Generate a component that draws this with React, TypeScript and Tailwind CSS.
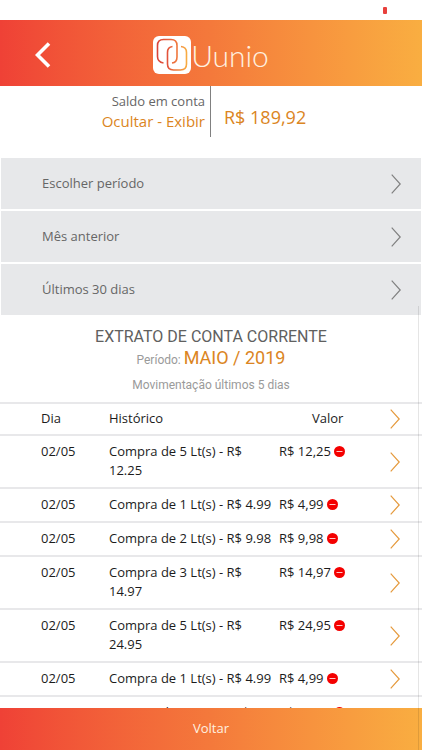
import type { ReactNode } from "react";

type Entry = {
  day: string;
  description: string;
  amount: string;
};

const periods = ["Escolher período", "Mês anterior", "Últimos 30 dias"];

const entries: Entry[] = [
  { day: "02/05", description: "Compra de 5 Lt(s) - R$ 12.25", amount: "R$ 12,25" },
  { day: "02/05", description: "Compra de 1 Lt(s) - R$ 4.99", amount: "R$ 4,99" },
  { day: "02/05", description: "Compra de 2 Lt(s) - R$ 9.98", amount: "R$ 9,98" },
  { day: "02/05", description: "Compra de 3 Lt(s) - R$ 14.97", amount: "R$ 14,97" },
  { day: "02/05", description: "Compra de 5 Lt(s) - R$ 24.95", amount: "R$ 24,95" },
  { day: "02/05", description: "Compra de 1 Lt(s) - R$ 4.99", amount: "R$ 4,99" },
  { day: "02/05", description: "Compra de 10 Lt(s) - R$ 49.90", amount: "R$ 49,90" },
];

function Chevron({ className }: { className: string }) {
  return (
    <svg viewBox="0 0 10 20" className={`h-5 w-[10px] shrink-0 ${className}`} fill="none" stroke="currentColor" strokeWidth="1.2" aria-hidden="true">
      <path d="M0.7 0.7 9.2 10 0.7 19.3" />
    </svg>
  );
}

function MinusBadge() {
  return (
    <svg viewBox="0 0 11 11" className="ml-[3px] inline-block size-[11px] align-[-1px]" aria-hidden="true">
      <circle cx="5.5" cy="5.5" r="5.5" fill="#f40000" />
      <path d="M2.5 5.5h6" stroke="#ffc9c9" strokeWidth="1" />
    </svg>
  );
}

function Logo() {
  return (
    <div className="flex items-center">
      <svg viewBox="0 0 38 38" className="size-[38px]" fill="none" aria-hidden="true">
        <defs>
          <linearGradient id="ring-left" x1="4" y1="0" x2="25" y2="0" gradientUnits="userSpaceOnUse">
            <stop stopColor="#d9433a" />
            <stop offset="1" stopColor="#f1793c" />
          </linearGradient>
          <linearGradient id="ring-right" x1="14" y1="0" x2="34" y2="0" gradientUnits="userSpaceOnUse">
            <stop stopColor="#e2503a" />
            <stop offset="1" stopColor="#f8ad42" />
          </linearGradient>
        </defs>
        <rect width="38" height="38" rx="6" fill="#fff" />
        <path d="M10.5 27Q4.5 26 4.5 20.5V9.5Q4.5 3.5 10.5 3.5H18Q24 3.5 24 9.5V21Q24 26.5 19 27" stroke="url(#ring-left)" strokeWidth="1.6" />
        <path d="M19.5 10.5Q14.5 11 14.5 16.5V28Q14.5 34 20.5 34H27.5Q33.5 34 33.5 28V16.5Q33.5 11 28 10.5" stroke="url(#ring-right)" strokeWidth="1.6" />
      </svg>
      <span className="font-['Lato'] text-[30px] leading-9 font-light text-[#fff1e0]">Uunio</span>
    </div>
  );
}

function HeadCell({ children, className = "" }: { children?: ReactNode; className?: string }) {
  return <th className={`pt-[5px] pb-1.5 text-left font-normal ${className}`}>{children}</th>;
}

export default function App() {
  return (
    <div className="relative flex h-dvh flex-col overflow-hidden bg-white font-['Open_Sans','Noto_Sans',sans-serif] text-[13px] text-[#1c1c1c]">
      <div className="flex h-5 shrink-0 items-center justify-end pr-[35px]">
        <span className="h-[7px] w-1 rounded-[1px] bg-[#e8403c]" />
      </div>
      <header className="grid h-[66px] shrink-0 grid-cols-[1fr_auto_1fr] items-center bg-linear-to-r from-[#ef4136] via-[#f4793b] to-[#f9ae41] pt-1">
        <button type="button" aria-label="Voltar à tela anterior" className="ml-[35px] w-4">
          <svg viewBox="0 0 16 26" className="h-[26px] w-4" fill="none" stroke="#fff" strokeWidth="3.6" aria-hidden="true">
            <path d="M14 1.5 2.5 13 14 24.5" />
          </svg>
        </button>
        <Logo />
      </header>

      <main className="min-h-0 flex-1 overflow-hidden">
        <section className="flex h-[72px] items-start">
          <div className="flex h-[51px] w-1/2 flex-col items-end border-r border-[#808080] pt-[5px] pr-[5px]">
            <span className="leading-5 text-[#666]">Saldo em conta</span>
            <button type="button" className="text-[15px] leading-5 text-[#db8522]">
              Ocultar - Exibir
            </button>
          </div>
          <span className="pt-[17px] pl-[13px] text-lg leading-7 text-[#db8522]">R$ 189,92</span>
        </section>

        <nav className="flex flex-col gap-0.5 px-px">
          {periods.map((label) => (
            <button key={label} type="button" className="flex h-[51px] items-center justify-between bg-[#e7e8ea] pr-5 pl-[41px] text-[#666]">
              {label}
              <Chevron className="text-[#808080]" />
            </button>
          ))}
        </nav>

        <section className="pt-3 pb-[7px] text-center font-['Roboto',sans-serif]">
          <h1 className="text-base leading-5 text-[#606060]">EXTRATO DE CONTA CORRENTE</h1>
          <p className="text-xs leading-[22px] text-[#9a9a9a]">
            Período: <strong className="text-lg leading-[22px] font-normal text-[#db8522]">MAIO / 2019</strong>
          </p>
          <p className="pt-1 text-xs leading-5 text-[#9a9a9a]">Movimentação últimos 5 dias</p>
        </section>

        <table className="w-full table-fixed border-collapse leading-[19px]">
          <colgroup>
            <col className="w-[109px]" />
            <col className="w-[170px]" />
            <col />
            <col className="w-8" />
          </colgroup>
          <thead>
            <tr className="border-y-2 border-[#e8e8ea]">
              <HeadCell className="pl-[41px]">Dia</HeadCell>
              <HeadCell>Histórico</HeadCell>
              <HeadCell className="pl-[33px]">Valor</HeadCell>
              <HeadCell>
                <Chevron className="-my-0.5 text-[#e59a3d]" />
              </HeadCell>
            </tr>
          </thead>
          <tbody>
            {entries.map((entry, i) => (
              <tr key={i} className="border-b-2 border-[#e8e8ea]">
                <td className="pt-1.5 pb-[7px] pl-[41px] align-top">{entry.day}</td>
                <td className="pt-1.5 pb-[7px] pr-[5px] align-top">{entry.description}</td>
                <td className="pt-1.5 pb-[7px] align-top whitespace-nowrap">
                  {entry.amount}
                  <MinusBadge />
                </td>
                <td className="align-middle">
                  <Chevron className="text-[#e59a3d]" />
                </td>
              </tr>
            ))}
          </tbody>
        </table>
      </main>

      <footer className="h-[42px] shrink-0">
        <button type="button" className="size-full bg-linear-to-r from-[#ef4136] via-[#f4793b] to-[#f9ae41] text-[#fff1e0]">
          Voltar
        </button>
      </footer>

      <div className="absolute top-[306px] right-[3px] bottom-0 w-px bg-black/10" />
    </div>
  );
}
